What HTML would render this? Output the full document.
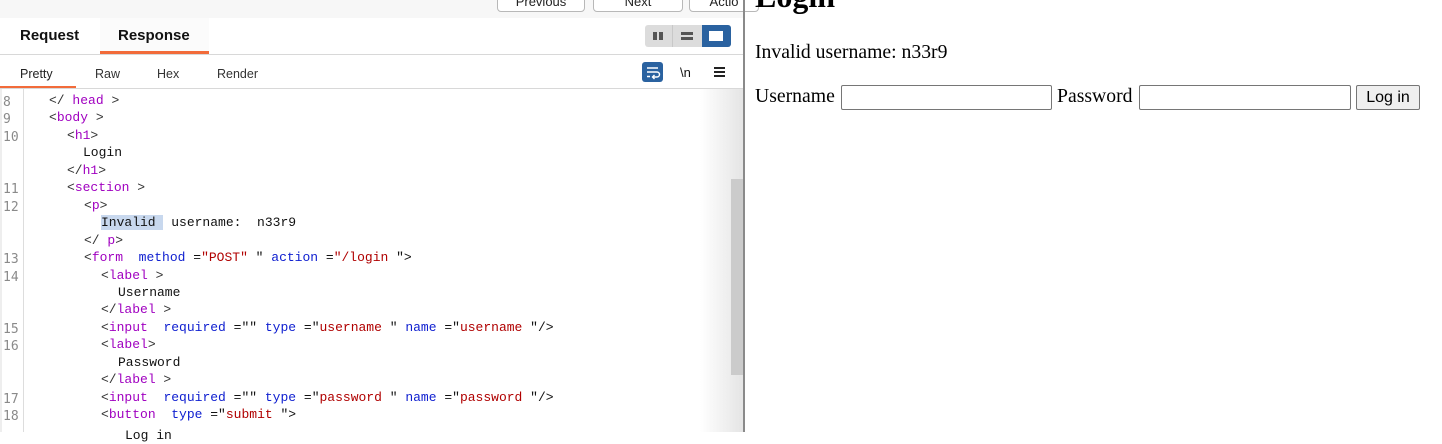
<!DOCTYPE html>
<html><head><meta charset="utf-8"><style>
*{margin:0;padding:0;box-sizing:border-box}
body{width:1442px;height:432px;overflow:hidden;background:#fff;position:relative;font-family:"Liberation Sans",sans-serif}
.abs{position:absolute}
.btn{position:absolute;top:-6px;height:18px;border:1px solid #b8b8b8;border-radius:4px;background:#fff;font-size:13px;text-align:center;line-height:14px;color:#222}
.code{position:absolute;left:0;top:92px;font-family:"Liberation Mono",monospace;font-size:13px;color:#111}
.ln{position:absolute;left:0;height:17.45px;line-height:17.45px;white-space:pre}
.num{position:absolute;left:3px;width:18px;font-size:13px;color:#8a8a8a;font-family:"DejaVu Sans Mono",monospace;line-height:22px;height:17.45px}
.t{color:#a000c0}.a{color:#1020d0}.v{color:#b00000}.p{color:#333}
.sr{font-family:'Liberation Serif',serif;font-size:19.7px;color:#000}
</style></head><body>
<div class="abs" style="left:0;top:0;width:745px;height:18px;background:#f7f7f7"></div>
<div class="btn" style="left:497px;width:88px">Previous</div>
<div class="btn" style="left:593px;width:90px">Next</div>
<div class="btn" style="left:689px;width:70px">Actio</div>
<div class="abs" style="left:0;top:18px;width:98px;height:36px;background:#fff"></div>
<div class="abs" style="left:100px;top:18px;width:109px;height:36px;background:#fbfbfb"></div>
<div class="abs" style="left:20px;top:27px;font-size:15px;font-weight:bold;color:#111">Request</div>
<div class="abs" style="left:118px;top:27px;font-size:15px;font-weight:bold;color:#111">Response</div>
<div class="abs" style="left:100px;top:51px;width:109px;height:3px;background:#f26b3a"></div>
<div class="abs" style="left:0;top:54px;width:745px;height:1px;background:#d8d8d8"></div>
<div class="abs" style="left:645px;top:25px;width:86px;height:22px;background:#dcdcdc;border-radius:3px"></div>
<div class="abs" style="left:672px;top:25px;width:1px;height:22px;background:#c8c8c8"></div>
<div class="abs" style="left:702px;top:25px;width:29px;height:22px;background:#2a62a0;border-radius:0 3px 3px 0"></div>
<div class="abs" style="left:653px;top:32px;width:4px;height:8px;background:#555"></div>
<div class="abs" style="left:659px;top:32px;width:4px;height:8px;background:#555"></div>
<div class="abs" style="left:681px;top:32px;width:12px;height:3px;background:#555"></div>
<div class="abs" style="left:681px;top:37px;width:12px;height:3px;background:#555"></div>
<div class="abs" style="left:709px;top:31px;width:14px;height:10px;background:#fff"></div>
<div class="abs" style="left:20px;top:67px;font-size:12.5px;color:#222">Pretty</div>
<div class="abs" style="left:95px;top:67px;font-size:12.5px;color:#333">Raw</div>
<div class="abs" style="left:157px;top:67px;font-size:12.5px;color:#333">Hex</div>
<div class="abs" style="left:217px;top:67px;font-size:12.5px;color:#333">Render</div>
<div class="abs" style="left:0;top:86px;width:76px;height:2px;background:#f26b3a"></div>
<div class="abs" style="left:0;top:88px;width:745px;height:1px;background:#d8d8d8"></div>
<div class="abs" style="left:642px;top:62px;width:21px;height:20px;background:#2a62a0;border-radius:3px"></div>
<svg class="abs" style="left:642px;top:62px" width="21" height="20"><path d="M5 6H16M5 10H15a2.5 2.5 0 0 1 0 5H11M12.5 13l-2 2 2 2M5 14.5H8" stroke="#fff" stroke-width="1.4" fill="none"/></svg>
<div class="abs" style="left:680px;top:65px;font-size:13px;color:#111">\n</div>
<div class="abs" style="left:714px;top:67px;width:11px;height:1.5px;background:#222;box-shadow:0 4px 0 #222,0 8px 0 #222"></div>
<div class="abs" style="left:23px;top:89px;width:1px;height:343px;background:#ddd"></div>
<div class="abs" style="left:0;top:89px;width:2px;height:343px;background:#eee"></div>
<div class="abs" style="left:700px;top:89px;width:44px;height:343px;background:linear-gradient(90deg,rgba(255,255,255,0),#e4e4e4)"></div>
<div class="abs" style="left:731px;top:179px;width:12px;height:196px;background:#cbcbcb"></div>
<div class="abs" style="left:743px;top:0;width:2px;height:432px;background:#8a8a8a"></div>
<div class="code">
<div class="num" style="top:0">8</div><div class="num" style="top:17.45px">9</div><div class="num" style="top:34.9px">10</div>
<div class="num" style="top:87.25px">11</div><div class="num" style="top:104.7px">12</div><div class="num" style="top:157px">13</div>
<div class="num" style="top:174.5px">14</div><div class="num" style="top:226.8px">15</div><div class="num" style="top:244.3px">16</div>
<div class="num" style="top:296.6px">17</div><div class="num" style="top:314px">18</div>
<div class="ln" style="top:0;left:49px"><span class="p">&lt;/</span> <span class="t">head</span><span class="p"> &gt;</span></div>
<div class="ln" style="top:17.45px;left:49px"><span class="p">&lt;</span><span class="t">body</span><span class="p"> &gt;</span></div>
<div class="ln" style="top:34.9px;left:67px"><span class="p">&lt;</span><span class="t">h1</span><span class="p">&gt;</span></div>
<div class="ln" style="top:52.35px;left:83px">Login</div>
<div class="ln" style="top:69.8px;left:67px"><span class="p">&lt;/</span><span class="t">h1</span><span class="p">&gt;</span></div>
<div class="ln" style="top:87.25px;left:67px"><span class="p">&lt;</span><span class="t">section</span><span class="p"> &gt;</span></div>
<div class="ln" style="top:104.7px;left:84px"><span class="p">&lt;</span><span class="t">p</span><span class="p">&gt;</span></div>
<div class="ln" style="top:122.15px;left:101px"><span style="background:#c8d8ee">Invalid </span> username:  n33r9</div>
<div class="ln" style="top:139.6px;left:84px"><span class="p">&lt;/</span> <span class="t">p</span><span class="p">&gt;</span></div>
<div class="ln" style="top:157px;left:84px"><span class="p">&lt;</span><span class="t">form</span>  <span class="a">method</span> =<span class="v">"POST"</span> " <span class="a">action</span> =<span class="v">"/login</span> "&gt;</div>
<div class="ln" style="top:174.5px;left:101px"><span class="p">&lt;</span><span class="t">label</span><span class="p"> &gt;</span></div>
<div class="ln" style="top:191.9px;left:118px">Username</div>
<div class="ln" style="top:209.4px;left:101px"><span class="p">&lt;/</span><span class="t">label</span><span class="p"> &gt;</span></div>
<div class="ln" style="top:226.8px;left:101px"><span class="p">&lt;</span><span class="t">input</span>  <span class="a">required</span> ="" <span class="a">type</span> ="<span class="v">username</span> " <span class="a">name</span> ="<span class="v">username</span> "/&gt;</div>
<div class="ln" style="top:244.3px;left:101px"><span class="p">&lt;</span><span class="t">label</span><span class="p">&gt;</span></div>
<div class="ln" style="top:261.7px;left:118px">Password</div>
<div class="ln" style="top:279.2px;left:101px"><span class="p">&lt;/</span><span class="t">label</span><span class="p"> &gt;</span></div>
<div class="ln" style="top:296.6px;left:101px"><span class="p">&lt;</span><span class="t">input</span>  <span class="a">required</span> ="" <span class="a">type</span> ="<span class="v">password</span> " <span class="a">name</span> ="<span class="v">password</span> "/&gt;</div>
<div class="ln" style="top:314px;left:101px"><span class="p">&lt;</span><span class="t">button</span>  <span class="a">type</span> ="<span class="v">submit</span> "&gt;</div>
<div class="ln" style="top:335px;left:125px">Log in</div>
</div>
<div class="abs" style="left:755px;top:-22px;font-family:'Liberation Serif',serif;font-size:32px;font-weight:bold;color:#000">Login</div>
<div class="abs sr" style="left:755px;top:41px">Invalid username: n33r9</div>
<div class="abs sr" style="left:755px;top:85px">Username</div>
<div class="abs" style="left:841px;top:85px;width:211px;height:25px;border:1px solid #767676;border-radius:2px"></div>
<div class="abs sr" style="left:1057px;top:85px">Password</div>
<div class="abs" style="left:1139px;top:85px;width:212px;height:25px;border:1px solid #767676;border-radius:2px"></div>
<div class="abs" style="left:1356px;top:85px;width:64px;height:25px;border:1px solid #767676;border-radius:2px;background:#efefef;font-size:16px;text-align:center;line-height:23px;color:#000">Log in</div>
</body></html>
